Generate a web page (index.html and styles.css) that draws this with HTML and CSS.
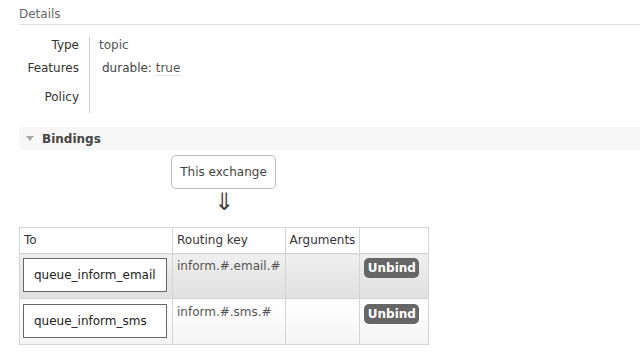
FILE: index.html
```html
<!DOCTYPE html>
<html lang="en">
<head>
    <meta charset="UTF-8">
    <title>Exchange: topic</title>
    <link rel="stylesheet" href="styles.css">
</head>
<body>
    <div class="page">
        <!-- Details -->
        <div class="section-title">Details</div>
        <div class="facts">
            <div class="fact-label row-type">Type</div>
            <div class="fact-value row-type">topic</div>
            <div class="fact-label row-features">Features</div>
            <div class="fact-value row-features features">durable: <span class="abbr">true</span></div>
            <div class="fact-label row-policy">Policy</div>
            <div class="fact-value row-policy"></div>
        </div>

        <!-- Bindings -->
        <div class="section-bar">
            <span class="triangle"></span>
            <span class="bar-title">Bindings</span>
        </div>

        <div class="exchange-box">This exchange</div>
        <div class="arrow">&#8659;</div>

        <table class="list">
            <thead>
                <tr>
                    <th class="col-to">To</th>
                    <th class="col-key">Routing key</th>
                    <th class="col-args">Arguments</th>
                    <th class="col-action"></th>
                </tr>
            </thead>
            <tbody>
                <tr class="alt1">
                    <td><span class="queue-box">queue_inform_email</span></td>
                    <td>inform.#.email.#</td>
                    <td></td>
                    <td><button class="unbind">Unbind</button></td>
                </tr>
                <tr class="alt2">
                    <td><span class="queue-box">queue_inform_sms</span></td>
                    <td>inform.#.sms.#</td>
                    <td></td>
                    <td><button class="unbind">Unbind</button></td>
                </tr>
            </tbody>
        </table>
    </div>
</body>
</html>
```

FILE: styles.css
```css
body {
    margin: 0;
    background: #ffffff;
    font-family: "DejaVu Sans", Verdana, sans-serif;
    font-size: 12px;
    color: #444;
}

.page {
    padding-left: 19px;
}

/* --- Details --- */
.section-title {
    height: 24px;
    line-height: 28px;
    color: #666;
    border-bottom: 1px solid #e0e0e0;
}

.facts {
    display: grid;
    grid-template-columns: 71px auto;
    margin-top: 12px;
}

.fact-label {
    text-align: right;
    padding-right: 10px;
    border-right: 1px solid #ccc;
    color: #333;
}

.fact-value {
    padding-left: 9px;
    color: #555;
}

.row-type { height: 16px; line-height: 16px; }
.row-features { height: 30px; line-height: 30px; }
.row-policy { height: 30px; line-height: 28px; }

.features {
    padding-left: 12px;
    color: #444;
}

.abbr {
    color: #555;
    border-bottom: 1px solid #e4e4e4;
}

/* --- Bindings --- */
.section-bar {
    margin-top: 14px;
    height: 23px;
    display: flex;
    align-items: center;
    background: #f7f7f7;
    border-radius: 4px 0 0 4px;
}

.triangle {
    width: 0;
    height: 0;
    margin-left: 7px;
    border-left: 4px solid transparent;
    border-right: 4px solid transparent;
    border-top: 5px solid #aaa;
}

.bar-title {
    margin-left: 8px;
    font-weight: bold;
    color: #444;
}

.exchange-box {
    margin-top: 5px;
    margin-left: 152px;
    width: 103px;
    height: 32px;
    line-height: 32px;
    text-align: center;
    border: 1px solid #bbb;
    border-radius: 5px;
    color: #444;
}

.arrow {
    margin-left: 192px;
    width: 26px;
    text-align: center;
    height: 26px;
    line-height: 26px;
    font-size: 24px;
    color: #444;
}

/* --- Tabela --- */
table.list {
    margin-top: 12px;
    border-collapse: collapse;
    border: 1px solid #ccc;
}

table.list th,
table.list td {
    border: 1px solid #d4d4d4;
    text-align: left;
    vertical-align: top;
    padding: 4px 4px;
}

table.list th {
    font-weight: normal;
    color: #333;
    height: 16px;
    line-height: 17px;
    background: #fff;
}

.col-to { width: 144px; }
.col-key { width: 103px; }
.col-args { width: 65px; }
.col-action { width: 60px; }

table.list td {
    color: #555;
    line-height: 16px;
}

tr.alt1 td {
    height: 36px;
    background: linear-gradient(#efefef, #e0e0e0);
}

tr.alt2 td {
    height: 36px;
    padding-top: 5px;
    background: linear-gradient(#ffffff, #f4f4f4);
}

table.list td:first-child {
    padding-left: 3px;
    padding-right: 5px;
}

.queue-box {
    display: block;
    width: 132px;
    height: 32px;
    line-height: 32px;
    padding-left: 10px;
    border: 1px solid #666;
    background: #fff;
    color: #222;
}

.unbind {
    display: block;
    font-family: "DejaVu Sans", Verdana, sans-serif;
    font-size: 12px;
    font-weight: bold;
    color: #fff;
    background: #666;
    border: none;
    border-radius: 5px;
    width: 55px;
    height: 20px;
    padding: 0;
    cursor: pointer;
}
```
